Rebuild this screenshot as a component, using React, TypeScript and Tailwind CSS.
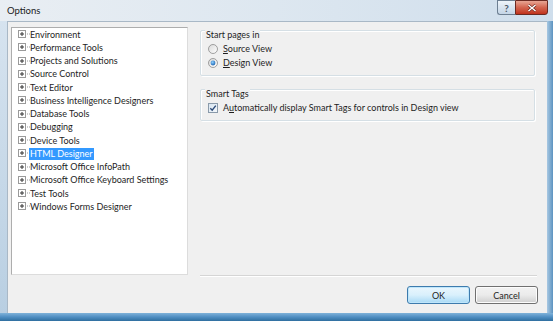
import React from "react";

const items = [
  "Environment",
  "Performance Tools",
  "Projects and Solutions",
  "Source Control",
  "Text Editor",
  "Business Intelligence Designers",
  "Database Tools",
  "Debugging",
  "Device Tools",
  "HTML Designer",
  "Microsoft Office InfoPath",
  "Microsoft Office Keyboard Settings",
  "Test Tools",
  "Windows Forms Designer",
];

function Plus() {
  return (
    <svg width="12" height="9" viewBox="0 0 12 9" className="shrink-0">
      <rect x="0.5" y="0.5" width="7" height="7" fill="#fff" stroke="#9a9a9a" />
      <path d="M2 4h4M4 2v4" stroke="#333" strokeWidth="1" />
      <path d="M9 4h1M11 4h1" stroke="#999" strokeWidth="1" />
    </svg>
  );
}

function Radio({ checked }: { checked?: boolean }) {
  return (
    <svg width="10" height="10" viewBox="0 0 10 10" className="shrink-0">
      <defs>
        <linearGradient id={checked ? "rg1" : "rg2"} x1="0" y1="0" x2="1" y2="1">
          <stop offset="0" stopColor="#d8d8d8" />
          <stop offset="1" stopColor="#ffffff" />
        </linearGradient>
        <radialGradient id="dot" cx="0.4" cy="0.35" r="0.7">
          <stop offset="0" stopColor="#8fd0ff" />
          <stop offset="1" stopColor="#1660b0" />
        </radialGradient>
      </defs>
      <circle cx="5" cy="5" r="4.5" fill={`url(#${checked ? "rg1" : "rg2"})`} stroke="#8a8a8a" strokeWidth="0.8" />
      {checked && <circle cx="5" cy="5" r="2.4" fill="url(#dot)" />}
    </svg>
  );
}

function Check() {
  return (
    <svg width="10" height="10" viewBox="0 0 10 10" className="shrink-0">
      <defs>
        <linearGradient id="cg" x1="0" y1="0" x2="1" y2="1">
          <stop offset="0" stopColor="#d6e4f0" />
          <stop offset="1" stopColor="#f6f9fc" />
        </linearGradient>
      </defs>
      <rect x="0.5" y="0.5" width="9" height="9" fill="url(#cg)" stroke="#8a9aaa" />
      <path d="M2.3 5.2 L4.2 7.2 L7.8 2.6" fill="none" stroke="#2c4a78" strokeWidth="1.4" />
    </svg>
  );
}

export default function App() {
  return (
    <div className="w-[553px] h-[321px] overflow-hidden flex flex-col bg-gradient-to-b from-[#dfe9f3] to-[#bcd4e8] font-['Lato',sans-serif] text-[9px] text-[#1e1e1e]">
      {/* Title bar */}
      <div className="h-[21px] flex items-start shrink-0 bg-gradient-to-r from-[#e9eef3] via-[#dde7f0] to-[#cfdeec]">
        <div className="pl-[7px] pt-[4px] text-[9.5px] leading-[14px] text-[#1a1a1a]">Options</div>
        <div className="ml-auto mr-[5px] flex">
          <div className="w-[18px] h-[15px] border border-[#6d7f92] border-r-0 rounded-bl-[3px] bg-gradient-to-b from-[#eef4fa] to-[#c4d5e6] flex items-center justify-center text-[10px] leading-none text-[#4a5766] font-bold">
            ?
          </div>
          <div className="w-[33px] h-[15px] border border-[#6b2a22] rounded-br-[3px] bg-gradient-to-b from-[#e7a594] via-[#d3644f] to-[#c0311b] flex items-center justify-center">
            <svg width="10" height="8" viewBox="0 0 10 8">
              <path d="M1.5 1 L8.5 7 M8.5 1 L1.5 7" stroke="#5a1a12" strokeWidth="2.6" />
              <path d="M1.5 1 L8.5 7 M8.5 1 L1.5 7" stroke="#ffffff" strokeWidth="1.6" />
            </svg>
          </div>
        </div>
      </div>

      {/* middle */}
      <div className="flex flex-1">
        <div className="w-[7px] shrink-0 bg-gradient-to-b from-[#d6e3ef] to-[#b9cfe2]" />
        <div className="flex-1 bg-[#f0f0f0] border-t border-l border-[#a9b8c6] flex flex-col">
          <div className="flex pt-[5px]">
            {/* tree */}
            <div className="ml-[3px] w-[177px] h-[248px] bg-white border border-[#adadad] border-r-[#dcdcdc] border-b-[#dcdcdc] pl-[6px] pt-[0px]">
              {items.map((it) => (
                <div key={it} className="h-[13.25px] flex items-center">
                  <Plus />
                  <span
                    className={
                      it === "HTML Designer"
                        ? "ml-[-1px] px-[1px] bg-[#3399ff] text-white leading-[12px]"
                        : "leading-[12px]"
                    }
                  >
                    {it}
                  </span>
                </div>
              ))}
            </div>
            {/* right */}
            <div className="ml-[12px] w-[337px] flex flex-col">
              <div className="relative mt-[3px] h-[46px] w-[335px] border border-[#d5dfe5] rounded-[2px] shadow-[inset_1px_1px_0_#ffffff,1px_1px_0_#ffffff]">
                <span className="absolute left-[4px] top-[-2px] bg-[#f0f0f0] px-[1px] leading-[11px]">Start pages in</span>
                <div className="pt-[13px] pl-[7px] flex flex-col gap-[4px]">
                  <div className="flex items-center gap-[5px] h-[10px]">
                    <Radio />
                    <span>
                      <u>S</u>ource View
                    </span>
                  </div>
                  <div className="flex items-center gap-[5px] h-[10px]">
                    <Radio checked />
                    <span>
                      <u>D</u>esign View
                    </span>
                  </div>
                </div>
              </div>
              <div className="relative mt-[13px] h-[32px] w-[335px] border border-[#d5dfe5] rounded-[2px] shadow-[inset_1px_1px_0_#ffffff,1px_1px_0_#ffffff]">
                <span className="absolute left-[4px] top-[-2px] bg-[#f0f0f0] px-[1px] leading-[11px]">Smart Tags</span>
                <div className="pt-[13px] pl-[7px]">
                  <div className="flex items-center gap-[5px] h-[10px]">
                    <Check />
                    <span>
                      A<u>u</u>tomatically display Smart Tags for controls in Design view
                    </span>
                  </div>
                </div>
              </div>
              <div className="flex-1" />
              <div className="h-[2px] w-[337px] border-t border-[#d5d5d5] border-b border-b-white mb-[-2px]" />
            </div>
          </div>
          <div className="flex justify-end gap-[5px] mr-[9px] mt-[11px]">
            <button className="w-[63px] h-[18px] rounded-[3px] border border-[#3d7bad] bg-gradient-to-b from-[#eaf6fd] via-[#d9f0fc] to-[#a7d9f5] shadow-[inset_0_0_0_1px_#bfe6fb] text-[9px] leading-none text-[#1e1e1e]">
              OK
            </button>
            <button className="w-[63px] h-[18px] rounded-[3px] border border-[#707070] bg-gradient-to-b from-[#f2f2f2] via-[#ebebeb] to-[#cfcfcf] shadow-[inset_0_0_0_1px_#fcfcfc] text-[9px] leading-none text-[#1e1e1e]">
              Cancel
            </button>
          </div>
        </div>
        <div className="w-[6px] shrink-0 bg-gradient-to-r from-[#a8c8e2] to-[#5c93c0]" />
      </div>
      <div className="h-[8px] shrink-0 bg-gradient-to-b from-[#7fb2d9] via-[#4f8ec2] to-[#2f6f9f]" />
    </div>
  );
}
